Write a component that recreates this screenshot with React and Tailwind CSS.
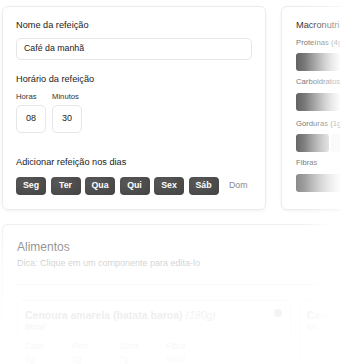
export default function App() {
  const days = ["Seg", "Ter", "Qua", "Qui", "Sex", "Sáb"];
  const font = { fontFamily: "'Liberation Sans', Arial, sans-serif" };
  const bar = "h-[18px] w-[46px] rounded-[3px] bg-[linear-gradient(to_right,#626262,#9a9a9a_45%,#f6f6f6_95%)]";
  return (
    <div className="relative w-[340px] h-[364px] overflow-hidden bg-white text-[#222]" style={font}>
      <div className="flex flex-col gap-[14px] pl-[2px] pt-[6px]">
        <div className="flex gap-[15px]">
          {/* Card 1 */}
          <div className="w-[264px] h-[204px] shrink-0 rounded-[6px] border border-[#ececec] shadow-[0_1px_3px_rgba(0,0,0,0.06)] px-[13px] pt-[11px]">
            <div className="text-[9.2px] leading-[14px]">Nome da refeição</div>
            <div className="mt-[6px] h-[22px] w-[236px] rounded-[5px] border border-[#e6e6e6] flex items-center px-[7px] text-[8.8px]">Café da manhã</div>
            <div className="mt-[12px] text-[9.2px] leading-[14px]">Horário da refeição</div>
            <div className="mt-[6px] flex gap-[6px]">
              <div className="flex flex-col">
                <div className="text-[7.7px] leading-[10px] text-[#333]">Horas</div>
                <div className="mt-[3px] w-[30px] h-[28px] rounded-[5px] border border-[#e6e6e6] flex items-center justify-center text-[9px]">08</div>
              </div>
              <div className="flex flex-col">
                <div className="text-[7.7px] leading-[10px] text-[#333]">Minutos</div>
                <div className="mt-[3px] w-[30px] h-[28px] rounded-[5px] border border-[#e6e6e6] flex items-center justify-center text-[9px]">30</div>
              </div>
            </div>
            <div className="mt-[22px] text-[9.2px] leading-[14px]">Adicionar refeição nos dias</div>
            <div className="mt-[8px] flex items-center gap-[4.5px]">
              {days.map((d) => (
                <div key={d} className="w-[30px] h-[18px] rounded-[4px] bg-[radial-gradient(ellipse_at_30%_30%,#585858,#434343)] text-white text-[8.8px] font-bold flex items-center justify-center">{d}</div>
              ))}
              <div className="ml-[6px] text-[8.8px] text-[#888]">Dom</div>
            </div>
          </div>
          {/* Card 2 */}
          <div className="w-[90px] h-[204px] shrink-0 rounded-[6px] border border-[#ececec] shadow-[0_1px_3px_rgba(0,0,0,0.06)] pl-[14px] pt-[11px]">
            <div className="text-[9.2px] leading-[14px] text-[#333] whitespace-nowrap">Macronutrientes</div>
            <div className="mt-[6px] text-[7.7px] leading-[10px] text-[#777] whitespace-nowrap">Proteínas (4g)</div>
            <div className={"mt-[5px] " + bar}></div>
            <div className="mt-[6px] text-[7.7px] leading-[10px] text-[#777] whitespace-nowrap">Carboidratos (2g)</div>
            <div className={"mt-[6px] " + bar}></div>
            <div className="mt-[8px] text-[7.7px] leading-[10px] text-[#777] whitespace-nowrap">Gorduras (1g)</div>
            <div className="mt-[5px] h-[18px] w-[46px] flex gap-[2px]">
              <div className="w-[33px] rounded-[3px] bg-[linear-gradient(to_right,#666,#cfcfcf)]"></div>
              <div className="flex-1 rounded-[3px] bg-[#f6f6f6]"></div>
            </div>
            <div className="mt-[6px] text-[7.7px] leading-[10px] text-[#777] whitespace-nowrap">Fibras</div>
            <div className="mt-[6px] h-[18px] w-[46px] rounded-[3px] bg-[linear-gradient(to_right,#8a8a8a,#bdbdbd_45%,#f8f8f8_95%)]"></div>
          </div>
        </div>
        {/* Card 3 */}
        <div className="w-[360px] h-[200px] rounded-[6px] border border-[#ececec] shadow-[0_1px_3px_rgba(0,0,0,0.06)] px-[14px] pt-[14px]">
          <div className="text-[12px] leading-[16px]">Alimentos</div>
          <div className="mt-[2px] text-[9px] leading-[12px] text-[#555]">Dica: Clique em um componente para edita-lo</div>
          <div className="mt-[15px] h-px w-[314px] bg-[#ddd]"></div>
          <div className="mt-[15px] flex gap-[8px]">
            <div className="relative w-[274px] shrink-0 h-[80px] rounded-[5px] border border-[#ddd] px-[7px] pt-[7px]">
              <div className="text-[10.5px] leading-[14px] whitespace-nowrap">
                <span className="font-bold text-[#444]">Cenoura amarela (batata baroa)</span>{" "}
                <span className="italic text-[#666]">(180g)</span>
              </div>
              <div className="text-[8.5px] leading-[10px] text-[#666]">8kcal</div>
              <div className="absolute right-[8px] top-[8px] w-[8px] h-[8px] rounded-full bg-[#888]"></div>
              <div className="mt-[9px] flex text-[8.5px] leading-[10px] italic text-[#666]">
                <div className="w-[47px]">Carb.<div className="not-italic mt-[3px]">5g</div></div>
                <div className="w-[47px]">Prot.<div className="not-italic mt-[3px]">5g</div></div>
                <div className="w-[47px]">Gord.<div className="not-italic mt-[3px]">7g</div></div>
                <div className="w-[47px]">Fibra<div className="not-italic mt-[3px]">8kcal</div></div>
              </div>
            </div>
            <div className="w-[100px] shrink-0 h-[80px] rounded-[5px] border border-[#ddd] px-[7px] pt-[7px]">
              <div className="text-[10.5px] leading-[14px] font-bold text-[#444] whitespace-nowrap">Cenoura</div>
              <div className="text-[8.5px] leading-[10px] text-[#666]">8kcal</div>
            </div>
          </div>
        </div>
      </div>
      {/* Fade overlays */}
      <div className="pointer-events-none absolute top-0 left-[305px] w-[35px] h-full bg-[linear-gradient(to_right,rgba(255,255,255,0)_0%,rgba(255,255,255,0.3)_50%,rgba(255,255,255,0.6)_100%)]"></div>
      <div className="pointer-events-none absolute top-[214px] left-[300px] w-[40px] h-[150px] bg-[linear-gradient(to_right,rgba(255,255,255,0)_0%,rgba(255,255,255,0.9)_70%,#fff_100%)]"></div>
      <div className="pointer-events-none absolute left-0 top-[214px] w-full h-[150px] bg-[linear-gradient(to_bottom,rgba(255,255,255,0)_0px,rgba(255,255,255,0.5)_32px,rgba(255,255,255,0.75)_50px,rgba(255,255,255,0.9)_95px,rgba(255,255,255,0.96)_150px)]"></div>
    </div>
  );
}
